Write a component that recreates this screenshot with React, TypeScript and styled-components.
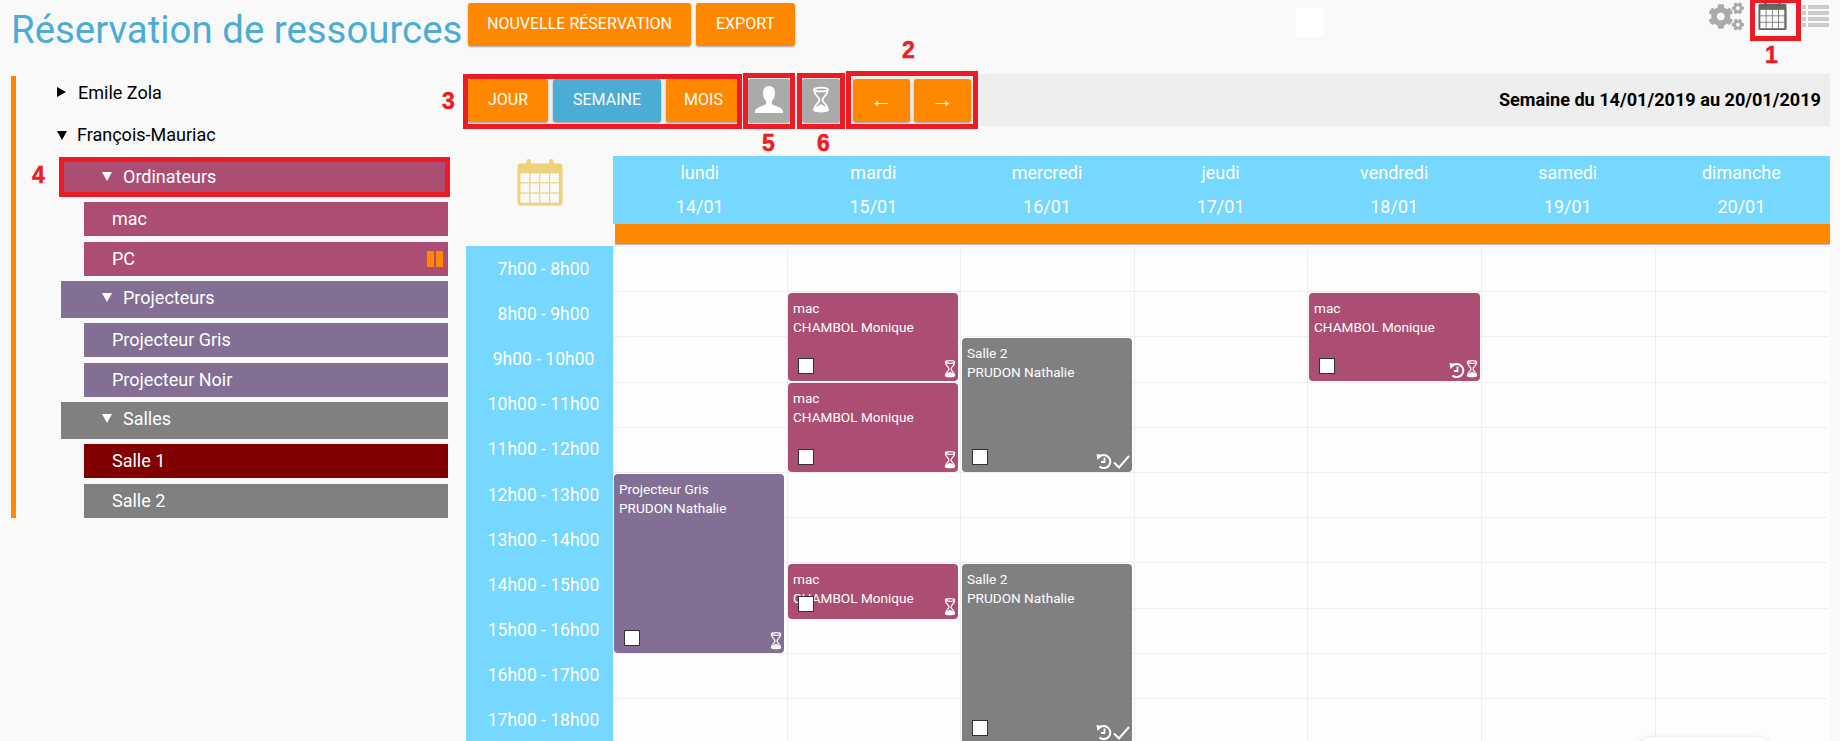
import React from "react";
import styled, { createGlobalStyle } from "styled-components";
import { FaCogs } from "react-icons/fa";

const Global = createGlobalStyle`
  html, body { margin: 0; padding: 0; background: #f9f9f9; }
  body { font-family: Roboto, "Liberation Sans", sans-serif; overflow: hidden; }
`;

const ORANGE = "#ff8800";
const BLUE = "#4badd6";
const SKY = "#76d7ff";
const PINK = "#ac4e73";
const PURPLE = "#826f93";
const GREY = "#808080";

const Page = styled.div`
  position: relative;
  width: 1840px;
  height: 741px;
  overflow: hidden;
  background: #f9f9f9;
`;

const Header = styled.header`
  display: flex;
  align-items: flex-start;
  height: 74px;
  padding-left: 11px;
  box-sizing: border-box;
`;

const Title = styled.h1`
  margin: 8px 0 0;
  width: 457px;
  font-size: 38.4px;
  line-height: 44px;
  font-weight: 400;
  color: ${BLUE};
  white-space: nowrap;
`;

const Button = styled.button<{ $bg?: string; $w: number }>`
  display: flex;
  align-items: center;
  justify-content: center;
  width: ${(p) => p.$w}px;
  height: 43px;
  padding: 0 0 2px;
  border: 0;
  border-radius: 3px;
  background: ${(p) => p.$bg || ORANGE};
  box-shadow: 0 1px 2px rgba(0, 0, 0, 0.35);
  color: #fff;
  font-family: Roboto, sans-serif;
  font-size: 16px;
  text-transform: uppercase;
`;

const NavButton = styled(Button)`
  font-family: "Liberation Sans", sans-serif;
  font-size: 22px;
`;

const HeaderActions = styled.div`
  display: flex;
  gap: 5px;
  margin-top: 3px;
`;

const WhiteSquare = styled.div`
  width: 28px;
  height: 29px;
  margin: 8px 0 0 501px;
  background: #fff;
`;

const TopIcons = styled.div`
  display: flex;
  align-items: flex-start;
  margin-left: auto;
  margin-right: 11px;
  color: #aaa;
`;

const Body = styled.div`
  display: flex;
  align-items: flex-start;
`;

const Sidebar = styled.aside`
  width: 437px;
  height: 442px;
  margin: 2px 0 0 11px;
  padding-top: 1px;
  box-sizing: border-box;
  border-left: 5px solid ${ORANGE};
`;

const SiteList = styled.div`
  display: flex;
  flex-direction: column;
  gap: 13px;
  margin-bottom: 10px;
`;

const Site = styled.div`
  display: flex;
  align-items: center;
  height: 30px;
  padding-left: 41px;
  font-size: 18px;
  color: #000;
`;

const SiteLabel = styled.span`
  margin-top: -1px;
`;

const Arrow = styled.span<{ $open?: boolean; $color: string }>`
  display: inline-block;
  width: 0;
  height: 0;
  ${(p) =>
    p.$open
      ? `border-left: 5.5px solid transparent;
         border-right: 5.5px solid transparent;
         border-top: 9px solid ${p.$color};
         margin-right: 10px;`
      : `border-top: 5px solid transparent;
         border-bottom: 5px solid transparent;
         border-left: 9px solid ${p.$color};
         margin-right: 12px;`}
`;

const Group = styled.div<{ $bg: string }>`
  display: flex;
  align-items: center;
  height: 37px;
  margin: 5px 0 0 45px;
  padding: 0 0 5px 41px;
  box-sizing: border-box;
  background: ${(p) => p.$bg};
  color: #fff;
  font-size: 18px;
  ${Arrow} {
    margin-right: 11px;
  }
`;

const Resource = styled.div<{ $bg: string }>`
  display: flex;
  align-items: center;
  justify-content: space-between;
  height: 34px;
  margin: 5px 0 0 68px;
  padding: 0 5px 1px 28px;
  box-sizing: border-box;
  background: ${(p) => p.$bg};
  color: #fff;
  font-size: 18px;
  & + & {
    margin-top: 6px;
  }
`;

const Pause = styled.span`
  width: 2px;
  height: 16px;
  border-right: 7px solid ${ORANGE};
  border-left: 7px solid ${ORANGE};
`;

const Calendar = styled.main`
  width: 1364px;
  margin-left: 18px;
`;

const Toolbar = styled.div`
  display: flex;
  align-items: center;
  height: 52px;
  padding: 1px 9px 0 2px;
  box-sizing: border-box;
  background: #eee;
`;

const ViewButtons = styled.div`
  display: flex;
  gap: 5px;
  margin-right: 7px;
`;

const IconButtons = styled.div`
  display: flex;
  gap: 12px;
  margin-right: 13px;
`;

const NavButtons = styled.div`
  display: flex;
  gap: 4px;
`;

const WeekLabel = styled.div`
  margin-left: auto;
  padding-bottom: 2px;
  font-size: 18.1px;
  font-weight: 700;
  color: #000;
`;

const HeadRow = styled.div`
  display: flex;
  margin-top: 30px;
`;

const CalendarCorner = styled.div`
  display: flex;
  justify-content: center;
  width: 147px;
  box-sizing: border-box;
`;

const Days = styled.div`
  display: grid;
  grid-template-columns: repeat(7, 173.6px);
  flex: 1;
  height: 68px;
  background: ${SKY};
`;

const Day = styled.div`
  display: flex;
  flex-direction: column;
  align-items: center;
  color: #fff;
  font-size: 18px;
  line-height: 34px;
`;

const OrangeBar = styled.div`
  height: 21px;
  margin-left: 149px;
  background: ${ORANGE};
  border-bottom: 1px solid #bbb;
  box-sizing: border-box;
`;

const Schedule = styled.div`
  display: flex;
  margin-top: 1px;
`;

const Hours = styled.div`
  width: 147px;
  background: ${SKY};
`;

const Hour = styled.div`
  display: flex;
  align-items: center;
  justify-content: center;
  height: 45.2px;
  padding-left: 8px;
  box-sizing: border-box;
  color: #fff;
  font-size: 17.5px;
`;

const Week = styled.div`
  position: relative;
  flex: 1;
  display: grid;
  grid-template-columns: repeat(7, 173.6px);
  grid-auto-rows: 45.2px;
  background: #fdfdfd;
`;

const Cell = styled.div`
  box-sizing: border-box;
  border-left: 1px solid #eee;
  border-top: 1px solid #eee;
`;

const Booking = styled.div<{ $x: number; $y: number; $w: number; $h: number; $bg: string }>`
  position: absolute;
  left: ${(p) => p.$x}px;
  top: ${(p) => p.$y}px;
  width: ${(p) => p.$w}px;
  height: ${(p) => p.$h}px;
  padding: 6px 5px;
  box-sizing: border-box;
  border-radius: 4px;
  background: ${(p) => p.$bg};
  color: #fff;
  font-size: 13.6px;
  line-height: 18.5px;
`;

const Tick = styled.span`
  position: absolute;
  left: 10px;
  bottom: 7px;
  width: 16px;
  height: 16px;
  box-sizing: border-box;
  border: 1px solid #333;
  background: #fff;
`;

const Status = styled.div`
  position: absolute;
  right: 2px;
  bottom: 3px;
  display: flex;
  align-items: flex-end;
  gap: 1px;
`;

const Mark = styled.div<{ $x: number; $y: number; $w: number; $h: number }>`
  position: absolute;
  left: ${(p) => p.$x}px;
  top: ${(p) => p.$y}px;
  width: ${(p) => p.$w}px;
  height: ${(p) => p.$h}px;
  box-sizing: border-box;
  border: 5px solid #ed1c24;
  pointer-events: none;
`;

const Num = styled.span<{ $x: number; $y: number }>`
  position: absolute;
  left: ${(p) => p.$x}px;
  top: ${(p) => p.$y}px;
  color: #ed1c24;
  font-family: "Liberation Sans", Arial, sans-serif;
  font-size: 23px;
  font-weight: 700;
  line-height: 22px;
  -webkit-text-stroke: 0.5px #ed1c24;
`;

const Pill = styled.div`
  position: absolute;
  left: 1633px;
  top: 737px;
  width: 144px;
  height: 40px;
  border-radius: 20px;
  background: #fff;
  box-shadow: 0 0 3px rgba(0, 0, 0, 0.15);
`;

const Gears = styled(FaCogs)`
  width: 35px;
  height: 33px;
  margin-right: 13px;
`;

const CalendarIcon = ({ w, h, color }: { w: number; h: number; color: string }) => (
  <svg width={w} height={h} viewBox="0 0 32 32" style={{ flexShrink: 0 }}>
    <path
      fill={color}
      d="M3 4h4V2.5a1.5 1.5 0 0 1 3 0V4h12V2.5a1.5 1.5 0 0 1 3 0V4h4a2 2 0 0 1 2 2v24a2 2 0 0 1-2 2H3a2 2 0 0 1-2-2V6a2 2 0 0 1 2-2z"
    />
    <g fill="#f9f9f9">
      {[0, 1, 2].map((r) =>
        [0, 1, 2, 3].map((c) => <rect key={`${r}-${c}`} x={3 + c * 6.6} y={10.5 + r * 6.8} width={5.8} height={6} />)
      )}
    </g>
  </svg>
);

const ListIcon = () => (
  <svg width="27" height="23" viewBox="0 0 27 23" fill="#ccc" style={{ marginTop: 5, marginLeft: 14 }}>
    {[0, 6, 12, 18].map((y) => (
      <g key={y}>
        <rect x="0" y={y} width="4" height="4" />
        <rect x="6" y={y} width="21" height="4" />
      </g>
    ))}
  </svg>
);

const PersonIcon = () => (
  <svg width="28" height="27" viewBox="0 0 28 27" fill="#fff">
    <path d="M14 0c4 0 6 3 6 7 0 3-1 6-3 8v3c2 2 10 3 11 7v2H0v-2c1-4 9-5 11-7v-3C9 13 8 10 8 7c0-4 2-7 6-7z" />
  </svg>
);

const Hourglass = ({ w, h }: { w: number; h: number }) => (
  <svg width={w} height={h} viewBox="0 0 12 18" fill="none" stroke="#fff" strokeWidth="1.2">
    <ellipse cx="6" cy="2" rx="4.6" ry="1.3" />
    <path d="M1.4 2.4C1.6 6 5 7 5 9s-3.6 3-3.6 6.5M10.6 2.4C10.4 6 7 7 7 9s3.6 3 3.6 6.5" />
    <path fill="#fff" d="M1.4 15.5C2.5 13.5 5 13.5 6 12.5c1 1 3.5 1 4.6 3 .2 1.6-9.4 1.6-9.2 0z" />
  </svg>
);

const HistoryIcon = () => (
  <svg width="16" height="16" viewBox="0 0 16 16" fill="none" stroke="#fff" strokeWidth="2">
    <path d="M3.2 4A6.5 6.5 0 1 1 3.5 13.5" />
    <path d="M.5 1l6 1-5 5z" fill="#fff" stroke="none" />
    <path d="M8.5 4.5v4.5H5" strokeWidth="1.8" />
  </svg>
);

const CheckIcon = () => (
  <svg width="17" height="14" viewBox="0 0 17 14" fill="none" stroke="#fff" strokeWidth="2">
    <path d="M1 7.5l5 5L16 1" />
  </svg>
);

const hours = ["7h00 - 8h00", "8h00 - 9h00", "9h00 - 10h00", "10h00 - 11h00", "11h00 - 12h00", "12h00 - 13h00", "13h00 - 14h00", "14h00 - 15h00", "15h00 - 16h00", "16h00 - 17h00", "17h00 - 18h00"];
const days = [
  ["lundi", "14/01"],
  ["mardi", "15/01"],
  ["mercredi", "16/01"],
  ["jeudi", "17/01"],
  ["vendredi", "18/01"],
  ["samedi", "19/01"],
  ["dimanche", "20/01"],
];

const bookings = [
  { x: 1, y: 228, w: 170, h: 179, bg: PURPLE, a: "Projecteur Gris", b: "PRUDON Nathalie", icons: "h" },
  { x: 175, y: 47, w: 170, h: 88, bg: PINK, a: "mac", b: "CHAMBOL Monique", icons: "h" },
  { x: 175, y: 137, w: 170, h: 89, bg: PINK, a: "mac", b: "CHAMBOL Monique", icons: "h" },
  { x: 175, y: 318, w: 170, h: 55, bg: PINK, a: "mac", b: "CHAMBOL Monique", icons: "h" },
  { x: 349, y: 92, w: 170, h: 134, bg: GREY, a: "Salle 2", b: "PRUDON Nathalie", icons: "rc" },
  { x: 349, y: 318, w: 170, h: 179, bg: GREY, a: "Salle 2", b: "PRUDON Nathalie", icons: "rc" },
  { x: 696, y: 47, w: 171, h: 88, bg: PINK, a: "mac", b: "CHAMBOL Monique", icons: "rh" },
];

const App = () => (
  <Page>
    <Global />
    <Header>
      <Title>Réservation de ressources</Title>
      <HeaderActions>
        <Button $w={223}>Nouvelle réservation</Button>
        <Button $w={99}>Export</Button>
      </HeaderActions>
      <WhiteSquare />
      <TopIcons>
        <Gears />
        <CalendarIcon w={31} h={30} color="#666" />
        <ListIcon />
      </TopIcons>
    </Header>
    <Body>
      <Sidebar>
        <SiteList>
          <Site><Arrow $color="#000" />Emile Zola</Site>
          <Site><Arrow $open $color="#000" /><SiteLabel>François-Mauriac</SiteLabel></Site>
        </SiteList>
        <Group $bg={PINK}><Arrow $open $color="#fff" />Ordinateurs</Group>
        <Resource $bg={PINK}>mac</Resource>
        <Resource $bg={PINK}>PC<Pause /></Resource>
        <Group $bg={PURPLE}><Arrow $open $color="#fff" />Projecteurs</Group>
        <Resource $bg={PURPLE}>Projecteur Gris</Resource>
        <Resource $bg={PURPLE}>Projecteur Noir</Resource>
        <Group $bg={GREY}><Arrow $open $color="#fff" />Salles</Group>
        <Resource $bg="#800000">Salle 1</Resource>
        <Resource $bg={GREY}>Salle 2</Resource>
      </Sidebar>
      <Calendar>
        <Toolbar>
          <ViewButtons>
            <Button $w={80}>Jour</Button>
            <Button $w={108} $bg={BLUE}>Semaine</Button>
            <Button $w={75}>Mois</Button>
          </ViewButtons>
          <IconButtons>
            <Button $w={42} $bg="#aaa"><PersonIcon /></Button>
            <Button $w={38} $bg="#aaa"><Hourglass w={18} h={28} /></Button>
          </IconButtons>
          <NavButtons>
            <NavButton $w={57}>←</NavButton>
            <NavButton $w={57}>→</NavButton>
          </NavButtons>
          <WeekLabel>Semaine du 14/01/2019 au 20/01/2019</WeekLabel>
        </Toolbar>
        <HeadRow>
          <CalendarCorner><CalendarIcon w={48} h={51} color="#edd27a" /></CalendarCorner>
          <Days>
            {days.map(([d, n]) => (
              <Day key={d}><span>{d}</span><span>{n}</span></Day>
            ))}
          </Days>
        </HeadRow>
        <OrangeBar />
        <Schedule>
          <Hours>
            {hours.map((h) => <Hour key={h}>{h}</Hour>)}
          </Hours>
          <Week>
            {Array.from({ length: 77 }).map((_, i) => <Cell key={i} />)}
            {bookings.map((b, i) => (
              <Booking key={i} $x={b.x} $y={b.y} $w={b.w} $h={b.h} $bg={b.bg}>
                {b.a}<br />{b.b}
                <Tick />
                <Status>
                  {b.icons.includes("r") && <HistoryIcon />}
                  {b.icons.includes("h") && <Hourglass w={12} h={18} />}
                  {b.icons.includes("c") && <CheckIcon />}
                </Status>
              </Booking>
            ))}
          </Week>
        </Schedule>
      </Calendar>
    </Body>
    <Pill />
    <Mark $x={1750} $y={-2} $w={51} $h={43} />
    <Mark $x={846} $y={71} $w={132} $h={58} />
    <Mark $x={463} $y={74} $w={279} $h={55} />
    <Mark $x={59} $y={157} $w={391} $h={40} />
    <Mark $x={743} $y={73} $w={52} $h={56} />
    <Mark $x={797} $y={73} $w={48} $h={56} />
    <Num $x={1765} $y={44}>1</Num>
    <Num $x={902} $y={39}>2</Num>
    <Num $x={442} $y={90}>3</Num>
    <Num $x={32} $y={164}>4</Num>
    <Num $x={762} $y={132}>5</Num>
    <Num $x={817} $y={132}>6</Num>
  </Page>
);

export default App;
